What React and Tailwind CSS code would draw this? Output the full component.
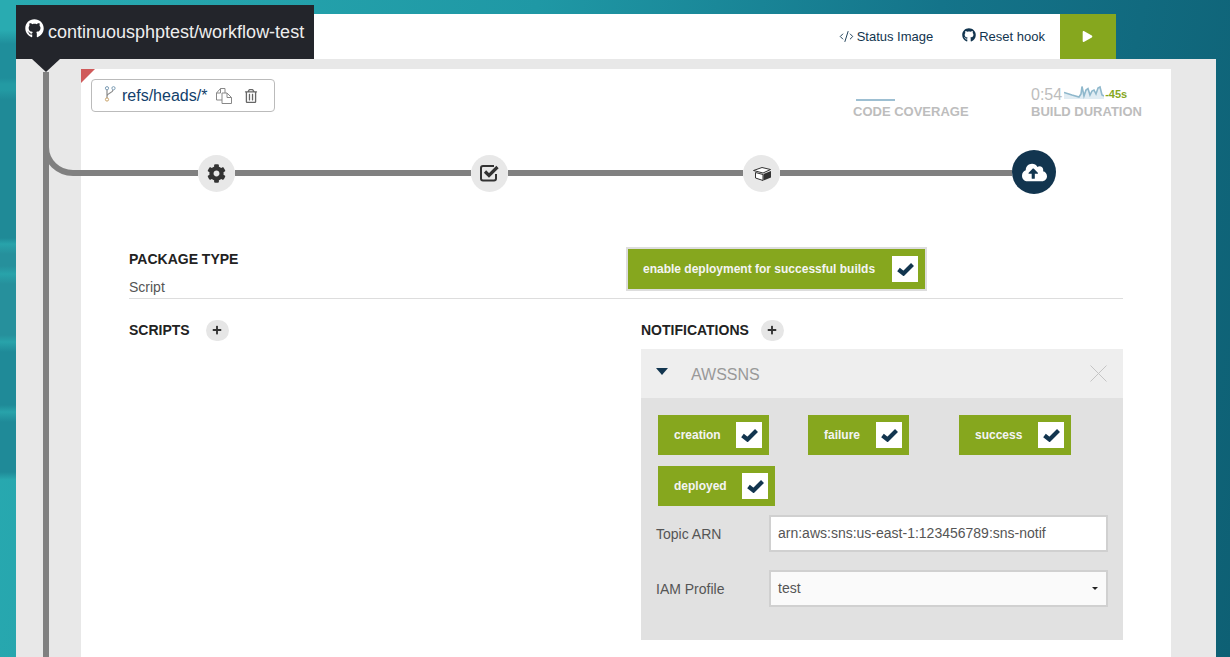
import React from 'react';
import { FaGithub, FaCog, FaCloudUploadAlt, FaPlay, FaPlus, FaRegTrashAlt } from 'react-icons/fa';
import { CodeXml } from 'lucide-react';

const BranchIcon = () => (
  <svg width="12" height="18" viewBox="0 0 12 18" fill="none" className="mt-[-3px] mr-[6px]">
    <path d="M3 5v8M9 5c0 3-6 3-6 6" stroke="#8a8a8a" strokeWidth="1.2" />
    <circle cx="3" cy="3.2" r="1.6" stroke="#7d9db5" strokeWidth="1" fill="#fff" />
    <circle cx="9.5" cy="3.2" r="1.6" stroke="#7d9db5" strokeWidth="1" fill="#fff" />
    <circle cx="3" cy="14.5" r="1.6" stroke="#c9a36a" strokeWidth="1" fill="#fff" />
  </svg>
);

const FilesIcon = () => (
  <svg width="16" height="16" viewBox="0 0 16 16" fill="none" stroke="#888" strokeWidth="1" className="ml-[9px]">
    <path d="M6 12H0.5V5L4.5 0.5H9V5" />
    <path d="M0.5 5H4.5V0.5" />
    <path d="M6 5H11L15.5 9.5V15.5H6Z" />
    <path d="M11 5V9.5H15.5" />
  </svg>
);

const CheckSquareIcon = () => (
  <svg width="20" height="17" viewBox="0 0 20 17" fill="none" stroke="#333" className="ml-[1px]">
    <path d="M16 9V13.5a2 2 0 0 1-2 2H3a2 2 0 0 1-2-2V3a2 2 0 0 1 2-2H14" strokeWidth="2" />
    <path d="M5 6.5L9 10.5L17.5 2" strokeWidth="3.2" />
  </svg>
);

const BoxIcon = () => (
  <svg width="18" height="14" viewBox="0 0 18 14">
    <path d="M0.5 3.5L9 0.5L17.5 2.5L10 6Z" fill="#fff" stroke="#333" strokeWidth="1" strokeLinejoin="round" />
    <path d="M2.5 5.5L10 7.5V13.5L2.5 11Z" fill="#fff" stroke="#333" strokeWidth="1" strokeLinejoin="round" />
    <path d="M10.5 7L18 4V10.5L10.5 13.5Z" fill="#333" />
  </svg>
);

const CheckIcon = () => (
  <svg width="17" height="13" viewBox="0 0 17 13" fill="none" stroke="#12354f" strokeWidth="4.2">
    <path d="M1.5 6.5L6.5 10.5L15.5 1.5" />
  </svg>
);

const Sparkline = () => {
  const points = 'L8 10 L15 12 L17 9 L18 1.5 L20 11 L22 5 L24 3.5 L26 10 L28 6 L30 5 L32 9 L34 3 L36 2 L38 10 L40 11';
  return (
    <svg width="40" height="14" viewBox="0 0 40 14" className="ml-[2px] mr-[1px] mt-[-4px]">
      <path d={`M0 7.5 ${points} V14 H0 Z`} fill="#e0ecf3" />
      <path d={`M0 7.5 ${points}`} fill="none" stroke="#8fb8cc" strokeWidth="1.6" />
    </svg>
  );
};

const StepCircle = ({ children }) => (
  <div className="w-[37px] h-[37px] mt-[3px] rounded-full bg-[#e8e8e8] flex items-center justify-center shrink-0 text-[#333]">
    {children}
  </div>
);

const Line = ({ className }) => <div className={`h-[6px] mt-[2px] bg-[#808080] shrink-0 ${className}`} />;

const CheckToggle = ({ label, width }) => (
  <div className={`h-[40px] bg-[#86a71e] flex items-center justify-between pl-[16px] pr-[7px] ${width}`}>
    <span className="text-[12px] font-bold text-[#f4f4f4]">{label}</span>
    <span className="w-[26px] h-[26px] bg-white flex items-center justify-center">
      <CheckIcon />
    </span>
  </div>
);

const AddButton = () => (
  <span className="w-[23px] h-[21px] rounded-full bg-[#e6e6e6] flex items-center justify-center text-[#333]">
    <FaPlus size={10} />
  </span>
);

export default function App() {
  const notifications = [
    { label: 'creation', width: 'w-[111px]' },
    { label: 'failure', width: 'w-[101px]' },
    { label: 'success', width: 'w-[112px]' },
    { label: 'deployed', width: 'w-[117px]' },
  ];

  return (
    <div className="relative h-[657px] overflow-hidden pt-[14px] pl-[16px] font-['Liberation_Sans',Arial,sans-serif] bg-[linear-gradient(100deg,#29abb1_0%,#1f98a5_40%,#14748a_70%,#0e6074_100%)]">
      {/* blurred bands down the left edge */}
      <div className="absolute left-0 top-0 w-[16px] h-[480px] bg-[linear-gradient(180deg,#29abb1_0px,#29abb1_30px,#1f8e9b_44px,#1f8e9b_78px,#239aa3_84px,#239aa3_90px,#1f8a97_100px,#1f8a97_238px,#28a3aa_244px,#26909c_254px,#26909c_266px,#28a3aa_274px,#26909c_284px,#26909c_335px,#28a3aa_342px,#1f8a98_352px,#1f8a98_405px,#28a3aa_412px,#1f8a98_422px,#1f8a98_472px,#29a9af_480px)]" />

      {/* header */}
      <div className="relative flex w-[1100px] h-[45px] bg-white">
        <div className="mt-[-9px] w-[298px] h-[54px] bg-[#23252b] text-white flex items-start pt-[14px] pl-[9px] text-[18px] leading-[26px] whitespace-nowrap">
          <FaGithub size={19} className="mr-[4px]" />
          <span className="text-[#eee]">continuousphptest/workflow-test</span>
        </div>
        <div className="absolute left-[16px] top-[45px] z-20 w-0 h-0 border-x-[14px] border-x-transparent border-t-[13px] border-t-[#23252b]" />
        <div className="ml-auto flex items-center text-[13px] text-[#12354f]">
          <span className="flex items-center mr-[29px]">
            <CodeXml size={15} strokeWidth={1.5} className="mr-[3px]" />
            Status Image
          </span>
          <span className="flex items-center mr-[15px]">
            <FaGithub size={14} className="mr-[3px] mt-[-3px]" />
            Reset hook
          </span>
          <div className="w-[56px] h-[45px] bg-[#86a71e] flex items-center justify-center pr-[2px] text-white">
            <FaPlay size={11} />
          </div>
        </div>
      </div>

      {/* gray panel */}
      <div className="relative w-[1200px] h-[598px] bg-[#e8e8e8] pt-[10px] pl-[65px] pr-[45px]">
        <div className="absolute left-[27px] top-[13px] w-[6px] bottom-0 bg-[#808080]" />
        <svg className="absolute left-[27px] top-[80px]" width="38" height="38" viewBox="0 0 38 38">
          <path d="M3 8A27 26 0 0 0 30 34L38 34" fill="none" stroke="#808080" strokeWidth="6" />
        </svg>

        <div className="relative h-full bg-white">
          <div className="absolute left-0 top-0 w-0 h-0 border-t-[14px] border-t-[#d05a5a] border-r-[14px] border-r-transparent" />

          {/* branch and stats */}
          <div className="flex items-start pt-[10px] pl-[10px] h-[81px]">
            <div className="w-[184px] h-[33px] border border-[#bbb] rounded-[4px] flex items-center pl-[12px]">
              <BranchIcon />
              <span className="text-[16px] text-[#12406b]">refs/heads/*</span>
              <FilesIcon />
              <FaRegTrashAlt size={14} className="ml-[12px] text-[#666]" />
            </div>
            <div className="ml-[578px] w-[115px] flex flex-col">
              <div className="h-[2px] w-[39px] bg-[#9dbfd2] ml-[3px] mt-[20px]" />
              <span className="text-[13px] font-bold text-[#bdbdbd] mt-[2px] leading-[17px] whitespace-nowrap">CODE COVERAGE</span>
            </div>
            <div className="ml-[63px] flex flex-col mt-[6px]">
              <div className="flex items-center h-[18px]">
                <span className="text-[16px] text-[#bdbdbd] pt-[2px]">0:54</span>
                <Sparkline />
                <span className="text-[11px] font-bold text-[#86a71e]">-45s</span>
              </div>
              <span className="text-[13px] font-bold text-[#bdbdbd] leading-[17px] whitespace-nowrap">BUILD DURATION</span>
            </div>
          </div>

          {/* pipeline */}
          <div className="flex items-center h-[44px]">
            <Line className="w-[117px]" />
            <StepCircle><FaCog size={19} /></StepCircle>
            <Line className="w-[236px]" />
            <StepCircle><CheckSquareIcon /></StepCircle>
            <Line className="w-[235px]" />
            <StepCircle><BoxIcon /></StepCircle>
            <Line className="w-[232px]" />
            <div className="w-[44px] h-[44px] rounded-full bg-[#12354f] flex items-center justify-center text-white shrink-0">
              <FaCloudUploadAlt size={25} />
            </div>
          </div>

          {/* form */}
          <div className="px-[48px] pt-[56px]">
            <div className="relative h-[50px] border-b border-[#ddd]">
              <div className="text-[14px] font-bold text-[#222] leading-[20px] mt-[-1px]">PACKAGE TYPE</div>
              <div className="text-[14px] text-[#555] leading-[20px] mt-[8px]">Script</div>
              <div className="absolute left-[497px] top-[-2px] w-[301px] h-[44px] border-2 border-[#ddd] bg-[#86a71e] flex items-center justify-between pl-[15px] pr-[7px]">
                <span className="text-[12px] font-bold text-[#f4f4f4]">enable deployment for successful builds</span>
                <span className="w-[26px] h-[26px] bg-white flex items-center justify-center">
                  <CheckIcon />
                </span>
              </div>
            </div>

            <div className="grid grid-cols-[512px_482px] pt-[21px]">
              <div className="flex items-center gap-[16px] h-[20px]">
                <span className="text-[14px] font-bold text-[#222]">SCRIPTS</span>
                <AddButton />
              </div>
              <div>
                <div className="flex items-center gap-[12px] h-[20px]">
                  <span className="text-[14px] font-bold text-[#222]">NOTIFICATIONS</span>
                  <AddButton />
                </div>
                <div className="mt-[9px] h-[49px] bg-[#eeeeee] flex items-center pl-[15px] pr-[16px]">
                  <span className="w-0 h-0 mt-[-4px] border-x-[6.5px] border-x-transparent border-t-[7px] border-t-[#12354f]" />
                  <span className="ml-[23px] text-[16px] text-[#999] pt-[2px]">AWSSNS</span>
                  <svg width="17" height="17" viewBox="0 0 17 17" stroke="#c4c4c4" strokeWidth="1" className="ml-auto">
                    <path d="M0.5 0.5L16.5 16.5M16.5 0.5L0.5 16.5" />
                  </svg>
                </div>
                <div className="h-[242px] bg-[#e1e1e1] pt-[17px] px-[15px]">
                  <div className="grid grid-cols-[150px_151px_151px] gap-y-[11px] pl-[2px]">
                    {notifications.map((n) => (
                      <CheckToggle key={n.label} label={n.label} width={n.width} />
                    ))}
                  </div>
                  <div className="flex items-center mt-[9px] h-[37px]">
                    <label className="w-[113px] text-[14px] text-[#555] pt-[1px]">Topic ARN</label>
                    <div className="w-[339px] h-[37px] border-2 border-[#d0d0d0] bg-white flex items-center pl-[7px] text-[14px] text-[#555] pb-[1px]">
                      arn:aws:sns:us-east-1:123456789:sns-notif
                    </div>
                  </div>
                  <div className="flex items-center mt-[18px] h-[37px]">
                    <label className="w-[113px] text-[14px] text-[#555] pt-[1px]">IAM Profile</label>
                    <div className="w-[339px] h-[37px] border-2 border-[#d0d0d0] bg-[#fafafa] flex items-center pl-[7px] pr-[8px] text-[14px] text-[#555] pb-[1px]">
                      test
                      <span className="ml-auto w-0 h-0 mt-[1px] border-x-[3px] border-x-transparent border-t-[3px] border-t-[#222]" />
                    </div>
                  </div>
                </div>
              </div>
            </div>
          </div>
        </div>
      </div>
    </div>
  );
}
